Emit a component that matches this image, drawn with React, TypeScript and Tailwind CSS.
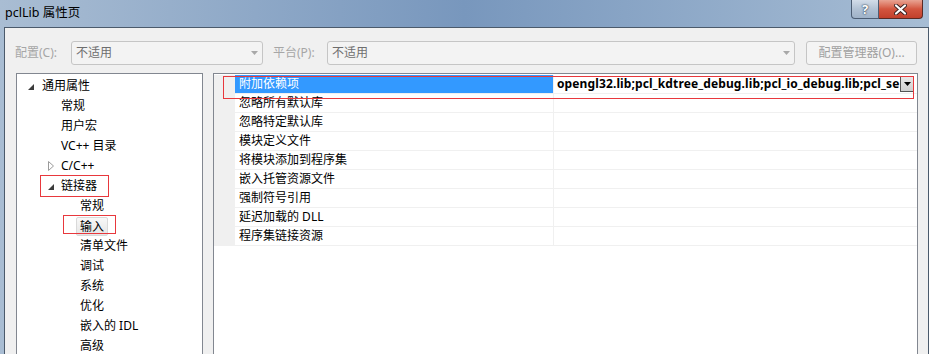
import React from "react";

const FONT = "font-['Noto_Sans','Noto_Sans_CJK_SC',sans-serif]";

function OpenTri() {
  return (
    <svg width="6" height="6" viewBox="0 0 6 6" className="block">
      <polygon points="6,0 6,6 0,6" fill="#3c3c3c" />
    </svg>
  );
}

function ClosedTri() {
  return (
    <svg width="6" height="10" viewBox="0 0 6 10" className="block">
      <polygon points="0.5,0.5 5.5,5 0.5,9.5" fill="none" stroke="#9a9a9a" strokeWidth="1" />
    </svg>
  );
}

function ComboArrow() {
  return (
    <svg width="7" height="4" viewBox="0 0 7 4" className="block">
      <polygon points="0,0 7,0 3.5,4" fill="#a8a8a8" />
    </svg>
  );
}

type TreeItem = {
  text: string;
  pl: number;
  tri?: "open" | "closed";
  selected?: boolean;
};

const tree: TreeItem[] = [
  { text: "通用属性", pl: 11, tri: "open" },
  { text: "常规", pl: 44 },
  { text: "用户宏", pl: 44 },
  { text: "VC++ 目录", pl: 44 },
  { text: "C/C++", pl: 31, tri: "closed" },
  { text: "链接器", pl: 31, tri: "open" },
  { text: "常规", pl: 63 },
  { text: "输入", pl: 59, selected: true },
  { text: "清单文件", pl: 63 },
  { text: "调试", pl: 63 },
  { text: "系统", pl: 63 },
  { text: "优化", pl: 63 },
  { text: "嵌入的 IDL", pl: 63 },
  { text: "高级", pl: 63 },
];

const props = [
  "附加依赖项",
  "忽略所有默认库",
  "忽略特定默认库",
  "模块定义文件",
  "将模块添加到程序集",
  "嵌入托管资源文件",
  "强制符号引用",
  "延迟加载的 DLL",
  "程序集链接资源",
];

export default function App() {
  return (
    <div
      className={`relative w-[929px] h-[354px] overflow-hidden flex flex-col bg-gradient-to-r from-[#a9bdd3] via-[#7897bd] to-[#a7bdd4] ${FONT} text-[12px] text-black`}
    >
      {/* title bar */}
      <div className="relative h-[27px] shrink-0 flex items-center pl-[5px] pb-[1px]">
        <span className="text-[12.5px] leading-[16px] text-black">pclLib 属性页</span>
        <div className="absolute top-0 right-[6px] flex">
          <div className="w-[28px] h-[19px] rounded-bl-[4px] border border-t-0 border-[#4c5d73] bg-gradient-to-b from-[#d3dde9] via-[#b2c2d4] to-[#9fb2c8] flex items-center justify-center">
            <span className="text-white font-bold text-[13px] leading-[13px] [text-shadow:0_0_1px_#2a3a4e,0_0_2px_#2a3a4e]">?</span>
          </div>
          <div className="w-[44px] h-[19px] rounded-br-[4px] border border-t-0 border-l-0 border-[#5a2a24] bg-gradient-to-b from-[#e8a393] via-[#d3553f] to-[#c2402b] flex items-center justify-center">
            <svg width="13" height="11" viewBox="0 0 13 11">
              <path d="M2 1.5 L11 9.5 M11 1.5 L2 9.5" stroke="#3a2020" strokeWidth="4" strokeLinecap="round" />
              <path d="M2 1.5 L11 9.5 M11 1.5 L2 9.5" stroke="#ffffff" strokeWidth="2.2" strokeLinecap="round" />
            </svg>
          </div>
        </div>
      </div>

      {/* client area */}
      <div className="ml-[4px] w-[925px] flex-1 bg-[#f0f0f0] border-l border-t border-r border-[#4b5a6b] flex flex-col">
        {/* top row */}
        <div className="mt-[13px] h-[24px] flex items-center pl-[10px]">
          <span className="w-[56px] text-[#a6a6a6] leading-[16px]">配置(C):</span>
          <div className="w-[192px] h-[24px] rounded-[3px] border border-[#c5c5c5] bg-[#f3f3f3] flex items-center pl-[4px] pr-[4px]">
            <span className="flex-1 text-[#6e6e6e] leading-[16px]">不适用</span>
            <ComboArrow />
          </div>
          <span className="ml-[10px] w-[54px] text-[#a6a6a6] leading-[16px]">平台(P):</span>
          <div className="w-[468px] h-[24px] rounded-[3px] border border-[#c5c5c5] bg-[#f3f3f3] flex items-center pl-[4px] pr-[4px]">
            <span className="flex-1 text-[#6e6e6e] leading-[16px]">不适用</span>
            <ComboArrow />
          </div>
          <div className="ml-[11px] w-[111px] h-[24px] rounded-[3px] border border-[#c5c5c5] bg-[#f4f4f4] flex items-center justify-center">
            <span className="text-[#a0a0a0] leading-[16px]">配置管理器(O)...</span>
          </div>
        </div>

        {/* panels */}
        <div className="mt-[8px] flex pl-[11px] gap-[10px]">
          {/* tree */}
          <div className="w-[187px] h-[300px] bg-white border border-[#828790] pt-[2px]">
            {tree.map((it, i) => (
              <div key={i} className="h-[20px] flex items-center" style={{ paddingLeft: it.pl }}>
                {it.tri === "open" && (
                  <div className={`${it.pl === 11 ? "w-[14px]" : "w-[13px]"} flex items-center pt-[1px]`}>
                    <OpenTri />
                  </div>
                )}
                {it.tri === "closed" && (
                  <div className="w-[13px] flex items-center">
                    <ClosedTri />
                  </div>
                )}
                {it.selected ? (
                  <span className="h-[19px] px-[3px] border border-[#d9d9d9] rounded-[2px] bg-gradient-to-b from-[#f8f8f8] to-[#e5e5e5] leading-[17px] whitespace-nowrap">
                    {it.text}
                  </span>
                ) : (
                  <span className="leading-[16px] whitespace-nowrap">{it.text}</span>
                )}
              </div>
            ))}
          </div>

          {/* property grid */}
          <div className="w-[705px] h-[300px] bg-white border border-[#828790] pt-[1px]">
            {props.map((p, i) => (
              <div key={i} className="h-[19px] flex border-b border-[#f0f0f0]">
                <div className="w-[21px] bg-[#f0f0f0]" />
                <div
                  className={`w-[319px] border-r border-[#f0f0f0] flex items-center pl-[4px] whitespace-nowrap leading-[16px] ${
                    i === 0 ? "bg-[#3399ff] text-white" : "text-black"
                  }`}
                >
                  {p}
                </div>
                <div className="flex-1 flex items-center min-w-0">
                  {i === 0 && (
                    <>
                      <div className="flex-1 min-w-0 overflow-hidden whitespace-nowrap pl-[3px] font-bold leading-[16px] tracking-[0.12px]">
                        opengl32.lib;pcl_kdtree_debug.lib;pcl_io_debug.lib;pcl_se
                      </div>
                      <div className="w-[14px] h-[16px] mr-[3px] border border-[#555555] bg-gradient-to-b from-[#e8e8e8] to-[#cfcfcf] flex items-center justify-center">
                        <svg width="7" height="4" viewBox="0 0 7 4">
                          <polygon points="0,0 7,0 3.5,4" fill="#000" />
                        </svg>
                      </div>
                    </>
                  )}
                </div>
              </div>
            ))}
          </div>
        </div>
      </div>

      {/* red annotation boxes */}
      <div className="absolute left-[223px] top-[76px] w-[691px] h-[23px] border border-[#e8383d]" />
      <div className="absolute left-[40px] top-[175px] w-[69px] h-[22px] border border-[#e8383d]" />
      <div className="absolute left-[63px] top-[215px] w-[53px] h-[19px] border border-[#e8383d]" />
    </div>
  );
}
